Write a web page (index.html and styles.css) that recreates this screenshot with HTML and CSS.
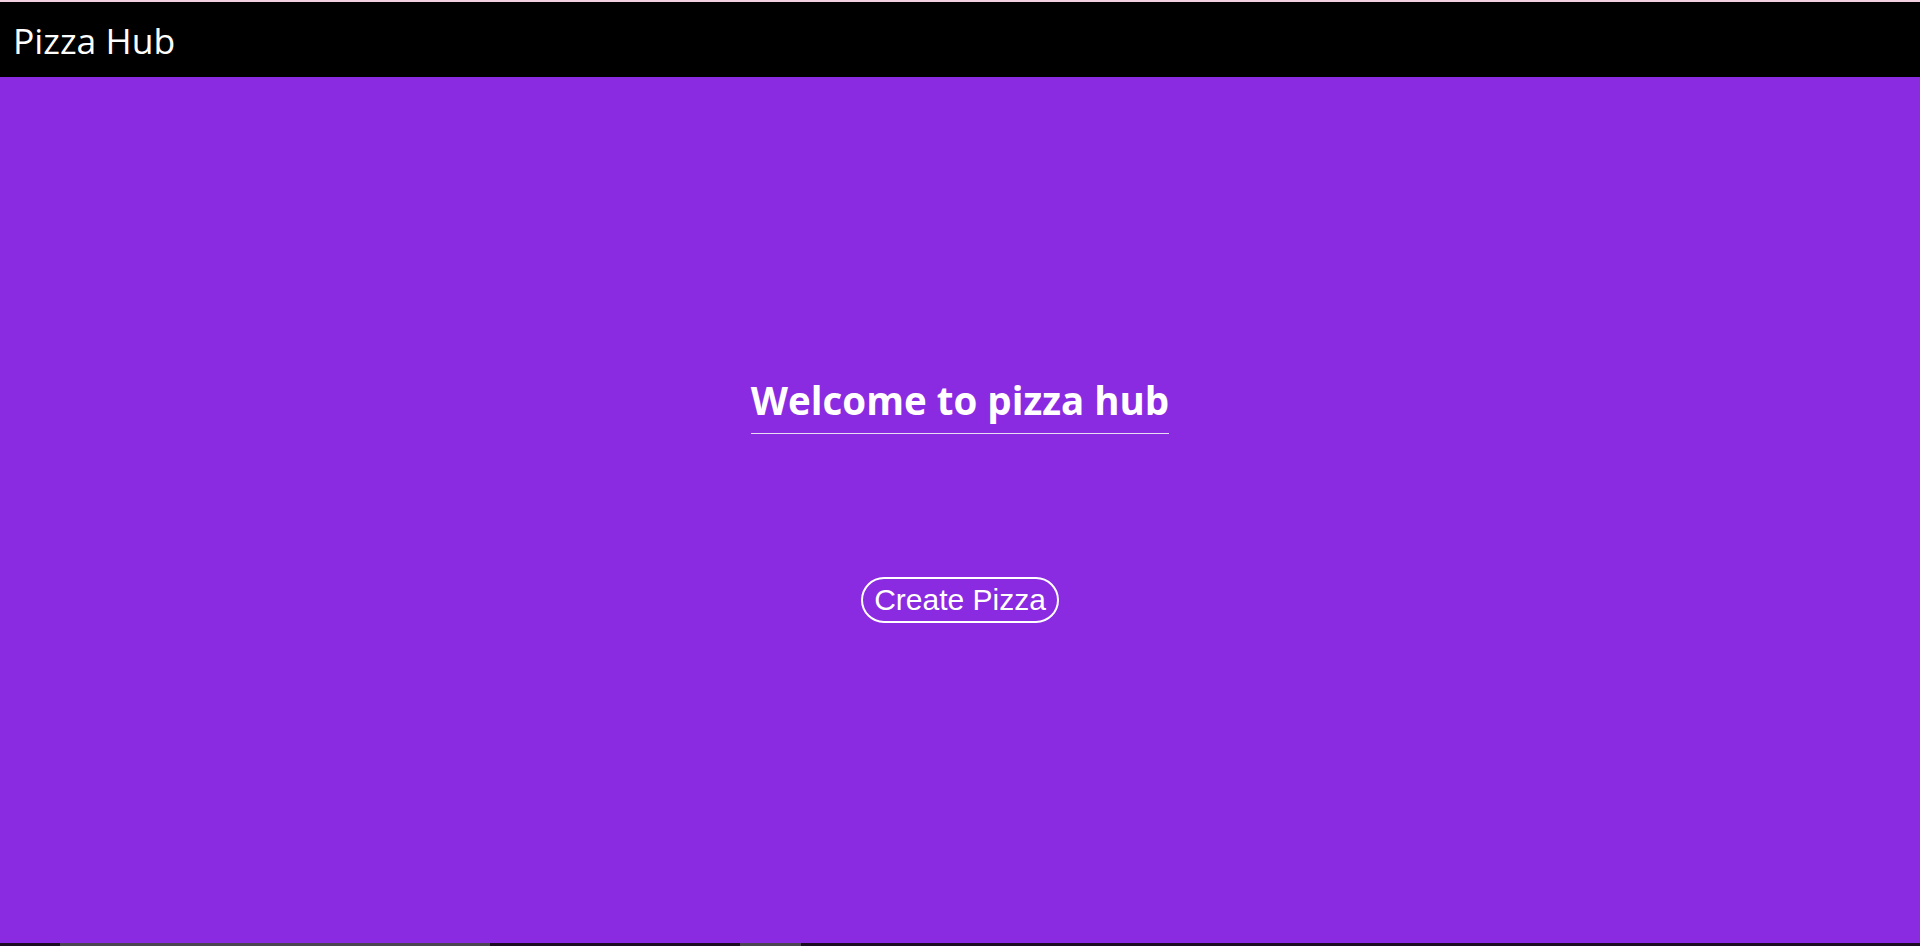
FILE: index.html
```html
<!DOCTYPE html>
<html lang="en">
<head>
<meta charset="utf-8">
<title>Pizza Hub</title>
<link rel="stylesheet" href="styles.css">
</head>
<body>
<div class="page">
  <header class="topbar">
    <span class="brand">Pizza Hub</span>
  </header>
  <main class="home">
    <h1 class="welcome">Welcome to pizza hub</h1>
    <button class="create-btn">Create Pizza</button>
  </main>
  <div class="bottom-strip">
    <span class="seg seg-a"></span>
    <span class="seg seg-b"></span>
  </div>
</div>
</body>
</html>
```
FILE: styles.css
```css
html, body {
  margin: 0;
  padding: 0;
  height: 100%;
  overflow: hidden;
}

.page {
  display: flex;
  flex-direction: column;
  height: 946px;
  background: #8a2be2;
}

.topbar {
  flex: 0 0 auto;
  height: 75px;
  border-top: 2px solid #f3d0e0;
  background: #000;
  display: flex;
  align-items: center;
  padding-left: 13px;
}

.brand {
  font-family: "Open Sans", "Noto Sans", sans-serif;
  font-size: 35.5px;
  color: #fff;
  line-height: 46px;
}

.home {
  flex: 1 1 auto;
  display: flex;
  flex-direction: column;
  align-items: center;
  padding-top: 297px;
  box-sizing: border-box;
}

.welcome {
  margin: 0;
  font-family: "Open Sans", "Noto Sans", sans-serif;
  font-weight: 700;
  font-size: 38.5px;
  line-height: 52px;
  padding-bottom: 7px;
  color: #fff;
  border-bottom: 1px solid #e8dcf5;
}

.create-btn {
  margin-top: 143px;
  font-family: "Liberation Sans", Arial, sans-serif;
  font-size: 30px;
  line-height: 34px;
  color: #fff;
  background: transparent;
  border: 2px solid #fff;
  border-radius: 24px;
  padding: 4px 11px;
  cursor: pointer;
}

.bottom-strip {
  flex: 0 0 3px;
  height: 3px;
  background: #1c0d22;
  display: flex;
}

.seg {
  height: 3px;
  background: #4b4552;
}

.seg-a {
  margin-left: 60px;
  width: 430px;
}

.seg-b {
  margin-left: 250px;
  width: 61px;
}
```
